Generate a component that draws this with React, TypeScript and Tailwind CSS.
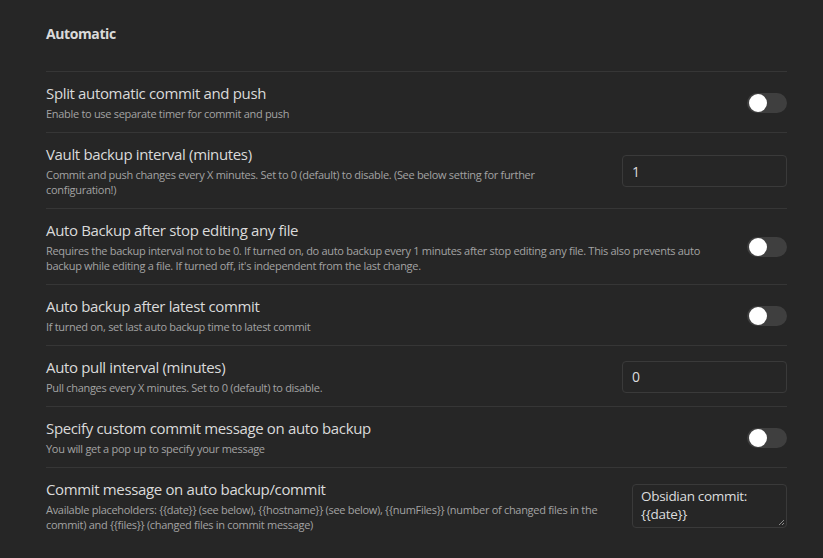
import type { ReactNode } from "react";

function Toggle() {
  return (
    <div className="flex h-5 w-10 shrink-0 items-center rounded-full bg-[#3f3f3f] px-[2px]">
      <div className="h-[18px] w-[18px] rounded-full bg-white" />
    </div>
  );
}

function TextInput({ value }: { value: string }) {
  return (
    <div className="flex h-8 w-[165px] items-center rounded-[4px] border border-[#3a3a3a] bg-[#262626] px-[9px] text-[14px] text-[#dcddde]">
      {value}
    </div>
  );
}

function CommitTextarea() {
  return (
    <div className="relative h-[44px] w-[155px] rounded-[4px] border border-[#3a3a3a] bg-[#262626] px-[8px] pt-[3px] text-[13.5px] leading-[17.5px] tracking-[-0.3px] text-[#dcddde]">
      <div>Obsidian commit:</div>
      <div>{"{{date}}"}</div>
      <svg className="absolute bottom-[1px] right-[1px]" width="8" height="8" viewBox="0 0 8 8">
        <path d="M7 2 L2 7 M7 5 L5 7" stroke="#8a8a8a" strokeWidth="1" />
      </svg>
    </div>
  );
}

interface SettingRowProps {
  name: string;
  desc: ReactNode;
  control: ReactNode;
}

function SettingRow({ name, desc, control }: SettingRowProps) {
  return (
    <div className="flex items-center border-t border-[#363636] pb-[11px] pt-3">
      <div className="min-w-0 flex-1 pr-6">
        <div className="text-[15px] leading-[19px] tracking-[-0.35px] text-[#dadada]">{name}</div>
        <div className="mt-[3px] text-[11px] leading-[15px] tracking-[-0.3px] text-[#a3a3a3]">{desc}</div>
      </div>
      <div className="flex shrink-0 justify-end">{control}</div>
    </div>
  );
}

export default function App() {
  return (
    <div
      className="h-[558px] w-[823px] overflow-hidden bg-[#262626] pl-[46px] pr-[36px]"
      style={{ fontFamily: '"Open Sans", "Noto Sans", sans-serif' }}
    >
      <div className="h-[71px] pt-[25px] text-[14px] font-bold leading-[18px] tracking-[-0.4px] text-[#dadada]">
        Automatic
      </div>
      <SettingRow
        name="Split automatic commit and push"
        desc="Enable to use separate timer for commit and push"
        control={<Toggle />}
      />
      <SettingRow
        name="Vault backup interval (minutes)"
        desc="Commit and push changes every X minutes. Set to 0 (default) to disable. (See below setting for further configuration!)"
        control={<TextInput value="1" />}
      />
      <SettingRow
        name="Auto Backup after stop editing any file"
        desc="Requires the backup interval not to be 0. If turned on, do auto backup every 1 minutes after stop editing any file. This also prevents auto backup while editing a file. If turned off, it's independent from the last change."
        control={<Toggle />}
      />
      <SettingRow
        name="Auto backup after latest commit"
        desc="If turned on, set last auto backup time to latest commit"
        control={<Toggle />}
      />
      <SettingRow
        name="Auto pull interval (minutes)"
        desc="Pull changes every X minutes. Set to 0 (default) to disable."
        control={<TextInput value="0" />}
      />
      <SettingRow
        name="Specify custom commit message on auto backup"
        desc="You will get a pop up to specify your message"
        control={<Toggle />}
      />
      <SettingRow
        name="Commit message on auto backup/commit"
        desc="Available placeholders: {{date}} (see below), {{hostname}} (see below), {{numFiles}} (number of changed files in the commit) and {{files}} (changed files in commit message)"
        control={<CommitTextarea />}
      />
    </div>
  );
}
